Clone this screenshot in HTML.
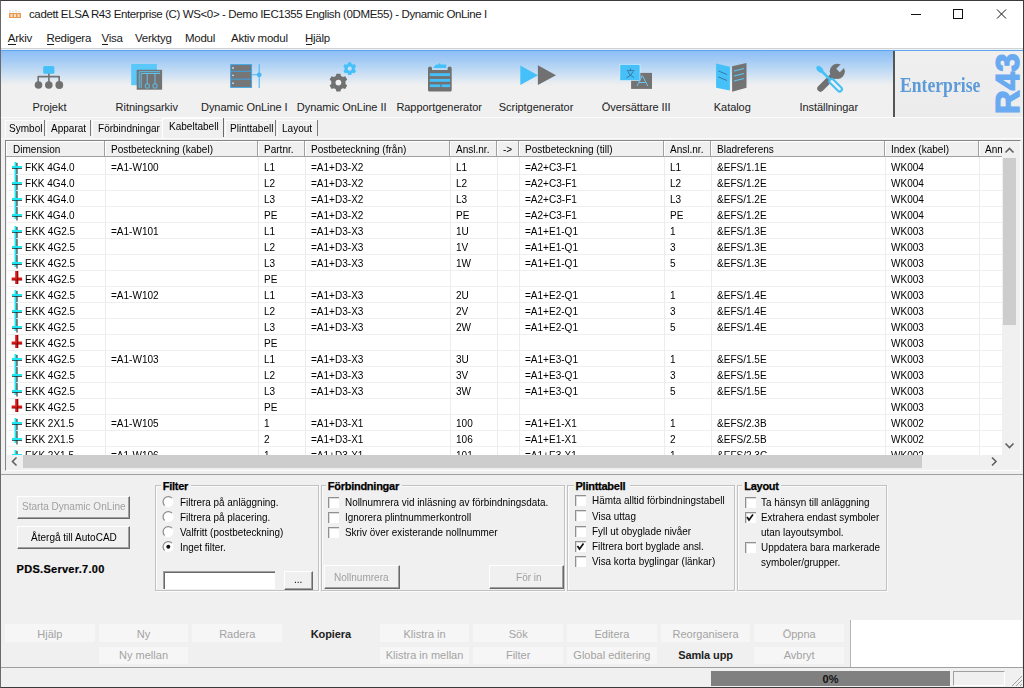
<!DOCTYPE html><html><head><meta charset="utf-8"><style>
html,body{margin:0;padding:0;width:1024px;height:688px;overflow:hidden;background:#f0f0f0;}
body{position:relative;font-family:"Liberation Sans",sans-serif;}
.t{position:absolute;white-space:pre;line-height:1;}
.r{position:absolute;box-sizing:border-box;}
svg{position:absolute;overflow:visible;}
</style></head><body><div class="r" style="left:0px;top:0px;width:1024px;height:48px;background:#fff;"></div><div class="r" style="left:0px;top:48px;width:1024px;height:1px;background:#d2d2d2;"></div><div class="r" style="left:0px;top:49px;width:1024px;height:1px;background:#eaf3fc;"></div><svg style="left:0;top:0" width="30" height="30">
<rect x="9" y="13" width="12" height="5" fill="#e89a55"/>
<rect x="10.5" y="14" width="2" height="3" fill="#fbe0c0"/><rect x="14" y="14" width="2" height="3" fill="#fbe0c0"/><rect x="17.5" y="14" width="2" height="3" fill="#fbe0c0"/>
<path d="M10 12.5V10M13 12.5V11M16 12.5V10M19 12.5V11" stroke="#d0d0d0" stroke-width="1"/>
</svg><div class="t" style="left:29px;top:9.37px;font-size:11.5px;letter-spacing:-0.38px;color:#1a1a1a;font-weight:400;font-family:'Liberation Sans',sans-serif;">cadett ELSA R43 Enterprise (C) WS&lt;0&gt; - Demo IEC1355 English (0DME55) - Dynamic OnLine I</div><svg style="left:0;top:0" width="1024" height="30">
<path d="M911 14.5H921" stroke="#111" stroke-width="1"/>
<rect x="953.5" y="9.5" width="9" height="9" fill="none" stroke="#111" stroke-width="1"/>
<path d="M997 9.5L1006 18.5M1006 9.5L997 18.5" stroke="#111" stroke-width="1"/>
</svg><div class="t" style="left:7.8px;top:33.07px;font-size:11.5px;letter-spacing:-0.25px;color:#1a1a1a;font-weight:400;font-family:'Liberation Sans',sans-serif;">Arkiv</div><div class="t" style="left:46.4px;top:33.07px;font-size:11.5px;letter-spacing:-0.25px;color:#1a1a1a;font-weight:400;font-family:'Liberation Sans',sans-serif;">Redigera</div><div class="t" style="left:101.5px;top:33.07px;font-size:11.5px;letter-spacing:-0.25px;color:#1a1a1a;font-weight:400;font-family:'Liberation Sans',sans-serif;">Visa</div><div class="t" style="left:135px;top:33.07px;font-size:11.5px;letter-spacing:-0.25px;color:#1a1a1a;font-weight:400;font-family:'Liberation Sans',sans-serif;">Verktyg</div><div class="t" style="left:185px;top:33.07px;font-size:11.5px;letter-spacing:-0.25px;color:#1a1a1a;font-weight:400;font-family:'Liberation Sans',sans-serif;">Modul</div><div class="t" style="left:231px;top:33.07px;font-size:11.5px;letter-spacing:-0.25px;color:#1a1a1a;font-weight:400;font-family:'Liberation Sans',sans-serif;">Aktiv modul</div><div class="t" style="left:305px;top:33.07px;font-size:11.5px;letter-spacing:-0.25px;color:#1a1a1a;font-weight:400;font-family:'Liberation Sans',sans-serif;">Hjälp</div><div class="r" style="left:8px;top:44px;width:8px;height:1px;background:#1a1a1a;"></div><div class="r" style="left:46.5px;top:44px;width:7px;height:1px;background:#1a1a1a;"></div><div class="r" style="left:102px;top:44px;width:6px;height:1px;background:#1a1a1a;"></div><div class="r" style="left:306px;top:44px;width:6px;height:1px;background:#1a1a1a;"></div><div class="r" style="left:0px;top:50px;width:1024px;height:1px;background:#5ea4f0;"></div><div class="r" style="left:0px;top:51px;width:1024px;height:66px;background:linear-gradient(#8cbff6 0px,#a3caf5 9px,#b9d7f4 17px,#d2e3f3 25px,#e7ecf1 31px,#f0f0f0 35px,#f0f0f0 66px);"></div><div class="r" style="left:0px;top:117px;width:1024px;height:1px;background:#fbfbfb;"></div><div class="r" style="left:893px;top:51px;width:1.5px;height:66px;background:#555;"></div><div class="r" style="left:894.5px;top:51px;width:128px;height:66px;background:linear-gradient(#efefef,#ececec);"></div><div class="t" style="left:900px;top:74.5px;font-family:'Liberation Serif',serif;font-weight:700;font-size:21px;color:#5c9ad8;transform:scaleX(0.84);transform-origin:0 0;">Enterprise</div><div class="t" style="left:991.3px;top:113.6px;font-family:'Liberation Sans',sans-serif;font-weight:700;font-size:33px;color:#6aaaf0;-webkit-text-stroke:1.3px #6aaaf0;transform:rotate(-90deg);transform-origin:0 0;line-height:1;">R43</div><div class="t" style="left:32.5px;top:101.99px;font-size:11px;letter-spacing:-0.05px;color:#222;font-weight:400;font-family:'Liberation Sans',sans-serif;">Projekt</div><div class="t" style="left:115.6px;top:101.99px;font-size:11px;letter-spacing:-0.05px;color:#222;font-weight:400;font-family:'Liberation Sans',sans-serif;">Ritningsarkiv</div><div class="t" style="left:201px;top:101.99px;font-size:11px;letter-spacing:-0.05px;color:#222;font-weight:400;font-family:'Liberation Sans',sans-serif;">Dynamic OnLine I</div><div class="t" style="left:296.8px;top:101.99px;font-size:11px;letter-spacing:-0.05px;color:#222;font-weight:400;font-family:'Liberation Sans',sans-serif;">Dynamic OnLine II</div><div class="t" style="left:396.4px;top:101.99px;font-size:11px;letter-spacing:-0.05px;color:#222;font-weight:400;font-family:'Liberation Sans',sans-serif;">Rapportgenerator</div><div class="t" style="left:498.8px;top:101.99px;font-size:11px;letter-spacing:-0.05px;color:#222;font-weight:400;font-family:'Liberation Sans',sans-serif;">Scriptgenerator</div><div class="t" style="left:601.7px;top:101.99px;font-size:11px;letter-spacing:-0.05px;color:#222;font-weight:400;font-family:'Liberation Sans',sans-serif;">Översättare III</div><div class="t" style="left:713.8px;top:101.99px;font-size:11px;letter-spacing:-0.05px;color:#222;font-weight:400;font-family:'Liberation Sans',sans-serif;">Katalog</div><div class="t" style="left:799.4px;top:101.99px;font-size:11px;letter-spacing:-0.05px;color:#222;font-weight:400;font-family:'Liberation Sans',sans-serif;">Inställningar</div><svg style="left:0;top:0" width="1024" height="117">
<!-- Projekt -->
<rect x="43.2" y="65.9" width="11.2" height="7.8" rx="1.5" fill="#45c0f8"/>
<path d="M48.9 73.5V77M38.2 76.6H59.2M38.2 76V82M48.9 76V82M59.2 76V82" stroke="#717171" stroke-width="1.6" fill="none"/>
<circle cx="38.5" cy="85" r="3.8" fill="#717171"/><circle cx="48.8" cy="85" r="3.8" fill="#717171"/><circle cx="59.3" cy="85" r="3.9" fill="#717171"/>
<!-- Ritningsarkiv -->
<rect x="131.2" y="64" width="25.7" height="21.2" fill="#5ac8fa"/>
<rect x="136.7" y="69.8" width="25.4" height="19.9" fill="#737373"/>
<path d="M139.2 88V71.7H160M141.2 88V73.5H160M147.2 73.5V84M155 73.5V84" stroke="#5ac8fa" stroke-width="0.9" fill="none"/>
<rect x="145.3" y="84" width="4" height="4" rx="1" stroke="#5ac8fa" stroke-width="0.9" fill="none"/>
<rect x="153" y="84" width="4" height="4" rx="1" stroke="#5ac8fa" stroke-width="0.9" fill="none"/>
<!-- Dynamic OnLine I -->
<rect x="230.6" y="64.6" width="21" height="22.8" fill="#767676" stroke="#3aa8ef" stroke-width="0.9"/>
<path d="M231 71.3H251.4M231 79.2H251.4" stroke="#3aa8ef" stroke-width="0.9"/>
<circle cx="233" cy="68" r="0.9" fill="#bfe6fb"/><circle cx="233" cy="75.3" r="0.9" fill="#bfe6fb"/><circle cx="233" cy="83.2" r="0.9" fill="#bfe6fb"/>
<path d="M252 74.8H259.2M259.2 64.3V88" stroke="#4bb6f5" stroke-width="1.1"/>
<circle cx="259.2" cy="74.8" r="2.4" fill="#4bb6f5"/>
<!-- Dynamic OnLine II -->
<g transform="translate(338.4 82.6)"><path id="gear" d="M-2 -8.8H2L2.6 -6.6L4.6 -5.6L6.8 -6.4L8.8 -3L7.1 -1.4V1.4L8.8 3L6.8 6.4L4.6 5.6L2.6 6.6L2 8.8H-2L-2.6 6.6L-4.6 5.6L-6.8 6.4L-8.8 3L-7.1 1.4V-1.4L-8.8 -3L-6.8 -6.4L-4.6 -5.6L-2.6 -6.6Z" fill="#717171"/><circle r="2.9" fill="#eef0f3"/></g>
<g transform="translate(349.7 68.7) scale(0.72)"><path d="M-2 -8.8H2L2.6 -6.6L4.6 -5.6L6.8 -6.4L8.8 -3L7.1 -1.4V1.4L8.8 3L6.8 6.4L4.6 5.6L2.6 6.6L2 8.8H-2L-2.6 6.6L-4.6 5.6L-6.8 6.4L-8.8 3L-7.1 1.4V-1.4L-8.8 -3L-6.8 -6.4L-4.6 -5.6L-2.6 -6.6Z" fill="#45c0f8"/><circle r="3" fill="#c2def8"/></g>
<!-- Rapportgenerator -->
<path d="M428 68.2Q428 66.4 430 66.4Q432 66.4 432 68.2V70H447.6V68.2Q447.6 66.4 449.7 66.4Q451.7 66.4 451.7 68.2V90Q451.7 91.5 450.2 91.5H429.5Q428 91.5 428 90Z" fill="#717171"/>
<path d="M433.1 68L436 64.5H438.5Q439.6 62.2 440.8 64.5H446.2V68Z" fill="#45c0f8"/>
<rect x="429.8" y="73.2" width="20.3" height="2.9" fill="#45c0f8"/>
<rect x="429.8" y="78.9" width="20.3" height="2.9" fill="#45c0f8"/>
<rect x="429.8" y="84.4" width="10.6" height="2.7" fill="#45c0f8"/><rect x="441.6" y="84.4" width="8.5" height="2.7" fill="#45c0f8"/>
<!-- Scriptgenerator -->
<path d="M520.3 65.6L538 75.3L520.3 85.1Z" fill="#45c0f8"/>
<path d="M537.9 65.2L556 75.2L537.9 85Z" fill="#717171"/>
<!-- Oversattare -->
<rect x="631.1" y="72.9" width="20.9" height="16" fill="#737373"/>
<rect x="619.9" y="64.3" width="20.1" height="16.2" fill="#45c0f8" stroke="#e4f1fb" stroke-width="0.6"/>
<path d="M630.5 68.5V70.3M626.8 70.6H634.4M628 71.5Q629.5 76 634 77.6M633 71.5Q631.5 76 626.5 77.8" stroke="#3d6f98" stroke-width="0.9" fill="none"/>
<path d="M637 86L642.3 75.5L647.8 86M639 82.5H645.7" stroke="#6bc6f5" stroke-width="1" fill="none"/>
<!-- Katalog -->
<path d="M716.1 63.5L729.9 66.8V90.6L716.1 87.8Z" fill="#45c0f8"/>
<path d="M718.5 71L727 74.5M718.5 77L727 80.5" stroke="#3c6d95" stroke-width="0.9"/>
<path d="M732.1 66.3L746.5 63V87.8L732.1 91.7Z" fill="#737373"/>
<path d="M734 71L744 68.5M734 76L744 73.5M734 81L744 78.5" stroke="#5ac8fa" stroke-width="1.2"/>
<!-- Installningar -->
<mask id="wm" maskUnits="userSpaceOnUse" x="800" y="50" width="60" height="50"><rect x="800" y="50" width="60" height="50" fill="#fff"/><path d="M838 70.5L847 61.5" stroke="#000" stroke-width="5" stroke-linecap="butt"/></mask>
<g mask="url(#wm)"><path d="M820.5 88.5L835 74" stroke="#717171" stroke-width="6.5" stroke-linecap="round"/><circle cx="837.3" cy="71.3" r="7.6" fill="#717171"/></g>
<path d="M819.5 69L829.2 78.7" stroke="#45c0f8" stroke-width="2.6" stroke-linecap="round"/><ellipse cx="819.8" cy="69.3" rx="4" ry="2.6" transform="rotate(45 819.8 69.3)" fill="#45c0f8"/>
<path d="M831.8 81.3L839.6 89.1" stroke="#45c0f8" stroke-width="6.8" stroke-linecap="round"/>
<path d="M831.8 81.3L839.6 89.1" stroke="#eef0f2" stroke-width="2.6" stroke-linecap="round"/>
</svg><div class="r" style="left:5px;top:120px;width:40px;height:17px;background:#f0f0f0;border-top:1px solid #fdfdfd;border-left:1px solid #fdfdfd;"></div><div class="r" style="left:44px;top:120px;width:1px;height:16px;background:#7a7a7a;"></div><div class="t" style="left:8.6px;top:123.21px;font-size:11.8px;letter-spacing:0px;color:#000;font-weight:400;font-family:'Liberation Sans',sans-serif;transform:scaleX(0.85);transform-origin:0 0;">Symbol</div><div class="r" style="left:46px;top:120px;width:45px;height:17px;background:#f0f0f0;border-top:1px solid #fdfdfd;border-left:1px solid #fdfdfd;"></div><div class="r" style="left:90px;top:120px;width:1px;height:16px;background:#7a7a7a;"></div><div class="t" style="left:51.25px;top:123.21px;font-size:11.8px;letter-spacing:0px;color:#000;font-weight:400;font-family:'Liberation Sans',sans-serif;transform:scaleX(0.85);transform-origin:0 0;">Apparat</div><div class="r" style="left:92px;top:120px;width:70px;height:17px;background:#f0f0f0;border-top:1px solid #fdfdfd;border-left:1px solid #fdfdfd;"></div><div class="t" style="left:97.7px;top:123.21px;font-size:11.8px;letter-spacing:0px;color:#000;font-weight:400;font-family:'Liberation Sans',sans-serif;transform:scaleX(0.85);transform-origin:0 0;">Förbindningar</div><div class="r" style="left:224.5px;top:120px;width:51.5px;height:17px;background:#f0f0f0;border-top:1px solid #fdfdfd;border-left:1px solid #fdfdfd;"></div><div class="r" style="left:275px;top:120px;width:1px;height:16px;background:#7a7a7a;"></div><div class="t" style="left:229.7px;top:123.21px;font-size:11.8px;letter-spacing:0px;color:#000;font-weight:400;font-family:'Liberation Sans',sans-serif;transform:scaleX(0.85);transform-origin:0 0;">Plinttabell</div><div class="r" style="left:277px;top:120px;width:40.5px;height:17px;background:#f0f0f0;border-top:1px solid #fdfdfd;border-left:1px solid #fdfdfd;"></div><div class="r" style="left:316.5px;top:120px;width:1px;height:16px;background:#7a7a7a;"></div><div class="t" style="left:282.4px;top:123.21px;font-size:11.8px;letter-spacing:0px;color:#000;font-weight:400;font-family:'Liberation Sans',sans-serif;transform:scaleX(0.85);transform-origin:0 0;">Layout</div><div class="r" style="left:161.5px;top:118px;width:62.5px;height:20px;background:#f0f0f0;border-top:1px solid #fff;border-left:1px solid #fff;"></div><div class="r" style="left:223px;top:118px;width:1px;height:19px;background:#6a6a6a;"></div><div class="t" style="left:168.75px;top:121.01px;font-size:11.8px;letter-spacing:0px;color:#000;font-weight:400;font-family:'Liberation Sans',sans-serif;transform:scaleX(0.85);transform-origin:0 0;">Kabeltabell</div><div class="r" style="left:0px;top:138px;width:1024px;height:1px;background:#fafafa;"></div><div class="r" style="left:5px;top:140px;width:1016px;height:331px;background:#f0f0f0;border-top:1px solid #858585;border-left:1px solid #858585;border-right:1px solid #fdfdfd;border-bottom:1px solid #fdfdfd;"></div><div class="r" style="left:7px;top:157px;width:995px;height:298px;background:#fff;"></div><div class="r" style="left:6px;top:141px;width:996px;height:16px;background:#f0f0f0;"></div><div class="r" style="left:6px;top:141px;width:996px;height:1px;background:#fff;"></div><div class="r" style="left:6px;top:141px;width:1px;height:16px;background:#fff;"></div><div class="r" style="left:6px;top:156px;width:996px;height:1px;background:#a0a0a0;"></div><div class="r" style="left:104px;top:141px;width:1px;height:15px;background:#a0a0a0;"></div><div class="r" style="left:105px;top:142px;width:1px;height:14px;background:#fff;"></div><div class="r" style="left:257px;top:141px;width:1px;height:15px;background:#a0a0a0;"></div><div class="r" style="left:258px;top:142px;width:1px;height:14px;background:#fff;"></div><div class="r" style="left:304px;top:141px;width:1px;height:15px;background:#a0a0a0;"></div><div class="r" style="left:305px;top:142px;width:1px;height:14px;background:#fff;"></div><div class="r" style="left:449px;top:141px;width:1px;height:15px;background:#a0a0a0;"></div><div class="r" style="left:450px;top:142px;width:1px;height:14px;background:#fff;"></div><div class="r" style="left:496px;top:141px;width:1px;height:15px;background:#a0a0a0;"></div><div class="r" style="left:497px;top:142px;width:1px;height:14px;background:#fff;"></div><div class="r" style="left:518px;top:141px;width:1px;height:15px;background:#a0a0a0;"></div><div class="r" style="left:519px;top:142px;width:1px;height:14px;background:#fff;"></div><div class="r" style="left:663px;top:141px;width:1px;height:15px;background:#a0a0a0;"></div><div class="r" style="left:664px;top:142px;width:1px;height:14px;background:#fff;"></div><div class="r" style="left:710px;top:141px;width:1px;height:15px;background:#a0a0a0;"></div><div class="r" style="left:711px;top:142px;width:1px;height:14px;background:#fff;"></div><div class="r" style="left:884px;top:141px;width:1px;height:15px;background:#a0a0a0;"></div><div class="r" style="left:885px;top:142px;width:1px;height:14px;background:#fff;"></div><div class="r" style="left:978px;top:141px;width:1px;height:15px;background:#a0a0a0;"></div><div class="r" style="left:979px;top:142px;width:1px;height:14px;background:#fff;"></div><div style="position:absolute;left:0;top:0;width:1002px;height:470px;overflow:hidden;"><div class="t" style="left:13px;top:144.41px;font-size:11.8px;letter-spacing:0px;color:#000;font-weight:400;font-family:'Liberation Sans',sans-serif;transform:scaleX(0.85);transform-origin:0 0;">Dimension</div><div class="t" style="left:111px;top:144.41px;font-size:11.8px;letter-spacing:0px;color:#000;font-weight:400;font-family:'Liberation Sans',sans-serif;transform:scaleX(0.85);transform-origin:0 0;">Postbeteckning (kabel)</div><div class="t" style="left:264px;top:144.41px;font-size:11.8px;letter-spacing:0px;color:#000;font-weight:400;font-family:'Liberation Sans',sans-serif;transform:scaleX(0.85);transform-origin:0 0;">Partnr.</div><div class="t" style="left:311px;top:144.41px;font-size:11.8px;letter-spacing:0px;color:#000;font-weight:400;font-family:'Liberation Sans',sans-serif;transform:scaleX(0.85);transform-origin:0 0;">Postbeteckning (från)</div><div class="t" style="left:456px;top:144.41px;font-size:11.8px;letter-spacing:0px;color:#000;font-weight:400;font-family:'Liberation Sans',sans-serif;transform:scaleX(0.85);transform-origin:0 0;">Ansl.nr.</div><div class="t" style="left:503px;top:144.41px;font-size:11.8px;letter-spacing:0px;color:#000;font-weight:400;font-family:'Liberation Sans',sans-serif;transform:scaleX(0.85);transform-origin:0 0;">-&gt;</div><div class="t" style="left:525px;top:144.41px;font-size:11.8px;letter-spacing:0px;color:#000;font-weight:400;font-family:'Liberation Sans',sans-serif;transform:scaleX(0.85);transform-origin:0 0;">Postbeteckning (till)</div><div class="t" style="left:670px;top:144.41px;font-size:11.8px;letter-spacing:0px;color:#000;font-weight:400;font-family:'Liberation Sans',sans-serif;transform:scaleX(0.85);transform-origin:0 0;">Ansl.nr.</div><div class="t" style="left:717px;top:144.41px;font-size:11.8px;letter-spacing:0px;color:#000;font-weight:400;font-family:'Liberation Sans',sans-serif;transform:scaleX(0.85);transform-origin:0 0;">Bladreferens</div><div class="t" style="left:891px;top:144.41px;font-size:11.8px;letter-spacing:0px;color:#000;font-weight:400;font-family:'Liberation Sans',sans-serif;transform:scaleX(0.85);transform-origin:0 0;">Index (kabel)</div><div class="t" style="left:985px;top:144.41px;font-size:11.8px;letter-spacing:0px;color:#000;font-weight:400;font-family:'Liberation Sans',sans-serif;transform:scaleX(0.85);transform-origin:0 0;">Anm</div></div><div style="position:absolute;left:7px;top:157px;width:995px;height:297.5px;overflow:hidden;"><div class="r" style="left:0px;top:17px;width:995px;height:1px;background:#efefef;"></div><div class="r" style="left:0px;top:33px;width:995px;height:1px;background:#efefef;"></div><div class="r" style="left:0px;top:49px;width:995px;height:1px;background:#efefef;"></div><div class="r" style="left:0px;top:65px;width:995px;height:1px;background:#efefef;"></div><div class="r" style="left:0px;top:81px;width:995px;height:1px;background:#efefef;"></div><div class="r" style="left:0px;top:97px;width:995px;height:1px;background:#efefef;"></div><div class="r" style="left:0px;top:113px;width:995px;height:1px;background:#efefef;"></div><div class="r" style="left:0px;top:129px;width:995px;height:1px;background:#efefef;"></div><div class="r" style="left:0px;top:145px;width:995px;height:1px;background:#efefef;"></div><div class="r" style="left:0px;top:161px;width:995px;height:1px;background:#efefef;"></div><div class="r" style="left:0px;top:177px;width:995px;height:1px;background:#efefef;"></div><div class="r" style="left:0px;top:193px;width:995px;height:1px;background:#efefef;"></div><div class="r" style="left:0px;top:209px;width:995px;height:1px;background:#efefef;"></div><div class="r" style="left:0px;top:225px;width:995px;height:1px;background:#efefef;"></div><div class="r" style="left:0px;top:241px;width:995px;height:1px;background:#efefef;"></div><div class="r" style="left:0px;top:257px;width:995px;height:1px;background:#efefef;"></div><div class="r" style="left:0px;top:273px;width:995px;height:1px;background:#efefef;"></div><div class="r" style="left:0px;top:289px;width:995px;height:1px;background:#efefef;"></div><div class="r" style="left:0px;top:305px;width:995px;height:1px;background:#efefef;"></div><div class="r" style="left:98px;top:0px;width:1px;height:300px;background:#ececec;"></div><div class="r" style="left:251px;top:0px;width:1px;height:300px;background:#ececec;"></div><div class="r" style="left:298px;top:0px;width:1px;height:300px;background:#ececec;"></div><div class="r" style="left:443px;top:0px;width:1px;height:300px;background:#ececec;"></div><div class="r" style="left:490px;top:0px;width:1px;height:300px;background:#ececec;"></div><div class="r" style="left:512px;top:0px;width:1px;height:300px;background:#ececec;"></div><div class="r" style="left:657px;top:0px;width:1px;height:300px;background:#ececec;"></div><div class="r" style="left:704px;top:0px;width:1px;height:300px;background:#ececec;"></div><div class="r" style="left:878px;top:0px;width:1px;height:300px;background:#ececec;"></div><div class="r" style="left:972px;top:0px;width:1px;height:300px;background:#ececec;"></div><div class="t" style="left:17.8px;top:5.11px;font-size:11.8px;letter-spacing:0px;color:#000;font-weight:400;font-family:'Liberation Sans',sans-serif;transform:scaleX(0.85);transform-origin:0 0;">FKK 4G4.0</div><div class="t" style="left:104px;top:5.11px;font-size:11.8px;letter-spacing:0px;color:#000;font-weight:400;font-family:'Liberation Sans',sans-serif;transform:scaleX(0.85);transform-origin:0 0;">=A1-W100</div><div class="t" style="left:257px;top:5.11px;font-size:11.8px;letter-spacing:0px;color:#000;font-weight:400;font-family:'Liberation Sans',sans-serif;transform:scaleX(0.85);transform-origin:0 0;">L1</div><div class="t" style="left:304px;top:5.11px;font-size:11.8px;letter-spacing:0px;color:#000;font-weight:400;font-family:'Liberation Sans',sans-serif;transform:scaleX(0.85);transform-origin:0 0;">=A1+D3-X2</div><div class="t" style="left:449px;top:5.11px;font-size:11.8px;letter-spacing:0px;color:#000;font-weight:400;font-family:'Liberation Sans',sans-serif;transform:scaleX(0.85);transform-origin:0 0;">L1</div><div class="t" style="left:518px;top:5.11px;font-size:11.8px;letter-spacing:0px;color:#000;font-weight:400;font-family:'Liberation Sans',sans-serif;transform:scaleX(0.85);transform-origin:0 0;">=A2+C3-F1</div><div class="t" style="left:663px;top:5.11px;font-size:11.8px;letter-spacing:0px;color:#000;font-weight:400;font-family:'Liberation Sans',sans-serif;transform:scaleX(0.85);transform-origin:0 0;">L1</div><div class="t" style="left:710px;top:5.11px;font-size:11.8px;letter-spacing:0px;color:#000;font-weight:400;font-family:'Liberation Sans',sans-serif;transform:scaleX(0.85);transform-origin:0 0;">&amp;EFS/1.1E</div><div class="t" style="left:884px;top:5.11px;font-size:11.8px;letter-spacing:0px;color:#000;font-weight:400;font-family:'Liberation Sans',sans-serif;transform:scaleX(0.85);transform-origin:0 0;">WK004</div><div class="t" style="left:17.8px;top:21.11px;font-size:11.8px;letter-spacing:0px;color:#000;font-weight:400;font-family:'Liberation Sans',sans-serif;transform:scaleX(0.85);transform-origin:0 0;">FKK 4G4.0</div><div class="t" style="left:257px;top:21.11px;font-size:11.8px;letter-spacing:0px;color:#000;font-weight:400;font-family:'Liberation Sans',sans-serif;transform:scaleX(0.85);transform-origin:0 0;">L2</div><div class="t" style="left:304px;top:21.11px;font-size:11.8px;letter-spacing:0px;color:#000;font-weight:400;font-family:'Liberation Sans',sans-serif;transform:scaleX(0.85);transform-origin:0 0;">=A1+D3-X2</div><div class="t" style="left:449px;top:21.11px;font-size:11.8px;letter-spacing:0px;color:#000;font-weight:400;font-family:'Liberation Sans',sans-serif;transform:scaleX(0.85);transform-origin:0 0;">L2</div><div class="t" style="left:518px;top:21.11px;font-size:11.8px;letter-spacing:0px;color:#000;font-weight:400;font-family:'Liberation Sans',sans-serif;transform:scaleX(0.85);transform-origin:0 0;">=A2+C3-F1</div><div class="t" style="left:663px;top:21.11px;font-size:11.8px;letter-spacing:0px;color:#000;font-weight:400;font-family:'Liberation Sans',sans-serif;transform:scaleX(0.85);transform-origin:0 0;">L2</div><div class="t" style="left:710px;top:21.11px;font-size:11.8px;letter-spacing:0px;color:#000;font-weight:400;font-family:'Liberation Sans',sans-serif;transform:scaleX(0.85);transform-origin:0 0;">&amp;EFS/1.2E</div><div class="t" style="left:884px;top:21.11px;font-size:11.8px;letter-spacing:0px;color:#000;font-weight:400;font-family:'Liberation Sans',sans-serif;transform:scaleX(0.85);transform-origin:0 0;">WK004</div><div class="t" style="left:17.8px;top:37.11px;font-size:11.8px;letter-spacing:0px;color:#000;font-weight:400;font-family:'Liberation Sans',sans-serif;transform:scaleX(0.85);transform-origin:0 0;">FKK 4G4.0</div><div class="t" style="left:257px;top:37.11px;font-size:11.8px;letter-spacing:0px;color:#000;font-weight:400;font-family:'Liberation Sans',sans-serif;transform:scaleX(0.85);transform-origin:0 0;">L3</div><div class="t" style="left:304px;top:37.11px;font-size:11.8px;letter-spacing:0px;color:#000;font-weight:400;font-family:'Liberation Sans',sans-serif;transform:scaleX(0.85);transform-origin:0 0;">=A1+D3-X2</div><div class="t" style="left:449px;top:37.11px;font-size:11.8px;letter-spacing:0px;color:#000;font-weight:400;font-family:'Liberation Sans',sans-serif;transform:scaleX(0.85);transform-origin:0 0;">L3</div><div class="t" style="left:518px;top:37.11px;font-size:11.8px;letter-spacing:0px;color:#000;font-weight:400;font-family:'Liberation Sans',sans-serif;transform:scaleX(0.85);transform-origin:0 0;">=A2+C3-F1</div><div class="t" style="left:663px;top:37.11px;font-size:11.8px;letter-spacing:0px;color:#000;font-weight:400;font-family:'Liberation Sans',sans-serif;transform:scaleX(0.85);transform-origin:0 0;">L3</div><div class="t" style="left:710px;top:37.11px;font-size:11.8px;letter-spacing:0px;color:#000;font-weight:400;font-family:'Liberation Sans',sans-serif;transform:scaleX(0.85);transform-origin:0 0;">&amp;EFS/1.2E</div><div class="t" style="left:884px;top:37.11px;font-size:11.8px;letter-spacing:0px;color:#000;font-weight:400;font-family:'Liberation Sans',sans-serif;transform:scaleX(0.85);transform-origin:0 0;">WK004</div><div class="t" style="left:17.8px;top:53.11px;font-size:11.8px;letter-spacing:0px;color:#000;font-weight:400;font-family:'Liberation Sans',sans-serif;transform:scaleX(0.85);transform-origin:0 0;">FKK 4G4.0</div><div class="t" style="left:257px;top:53.11px;font-size:11.8px;letter-spacing:0px;color:#000;font-weight:400;font-family:'Liberation Sans',sans-serif;transform:scaleX(0.85);transform-origin:0 0;">PE</div><div class="t" style="left:304px;top:53.11px;font-size:11.8px;letter-spacing:0px;color:#000;font-weight:400;font-family:'Liberation Sans',sans-serif;transform:scaleX(0.85);transform-origin:0 0;">=A1+D3-X2</div><div class="t" style="left:449px;top:53.11px;font-size:11.8px;letter-spacing:0px;color:#000;font-weight:400;font-family:'Liberation Sans',sans-serif;transform:scaleX(0.85);transform-origin:0 0;">PE</div><div class="t" style="left:518px;top:53.11px;font-size:11.8px;letter-spacing:0px;color:#000;font-weight:400;font-family:'Liberation Sans',sans-serif;transform:scaleX(0.85);transform-origin:0 0;">=A2+C3-F1</div><div class="t" style="left:663px;top:53.11px;font-size:11.8px;letter-spacing:0px;color:#000;font-weight:400;font-family:'Liberation Sans',sans-serif;transform:scaleX(0.85);transform-origin:0 0;">PE</div><div class="t" style="left:710px;top:53.11px;font-size:11.8px;letter-spacing:0px;color:#000;font-weight:400;font-family:'Liberation Sans',sans-serif;transform:scaleX(0.85);transform-origin:0 0;">&amp;EFS/1.2E</div><div class="t" style="left:884px;top:53.11px;font-size:11.8px;letter-spacing:0px;color:#000;font-weight:400;font-family:'Liberation Sans',sans-serif;transform:scaleX(0.85);transform-origin:0 0;">WK004</div><div class="t" style="left:17.8px;top:69.11px;font-size:11.8px;letter-spacing:0px;color:#000;font-weight:400;font-family:'Liberation Sans',sans-serif;transform:scaleX(0.85);transform-origin:0 0;">EKK 4G2.5</div><div class="t" style="left:104px;top:69.11px;font-size:11.8px;letter-spacing:0px;color:#000;font-weight:400;font-family:'Liberation Sans',sans-serif;transform:scaleX(0.85);transform-origin:0 0;">=A1-W101</div><div class="t" style="left:257px;top:69.11px;font-size:11.8px;letter-spacing:0px;color:#000;font-weight:400;font-family:'Liberation Sans',sans-serif;transform:scaleX(0.85);transform-origin:0 0;">L1</div><div class="t" style="left:304px;top:69.11px;font-size:11.8px;letter-spacing:0px;color:#000;font-weight:400;font-family:'Liberation Sans',sans-serif;transform:scaleX(0.85);transform-origin:0 0;">=A1+D3-X3</div><div class="t" style="left:449px;top:69.11px;font-size:11.8px;letter-spacing:0px;color:#000;font-weight:400;font-family:'Liberation Sans',sans-serif;transform:scaleX(0.85);transform-origin:0 0;">1U</div><div class="t" style="left:518px;top:69.11px;font-size:11.8px;letter-spacing:0px;color:#000;font-weight:400;font-family:'Liberation Sans',sans-serif;transform:scaleX(0.85);transform-origin:0 0;">=A1+E1-Q1</div><div class="t" style="left:663px;top:69.11px;font-size:11.8px;letter-spacing:0px;color:#000;font-weight:400;font-family:'Liberation Sans',sans-serif;transform:scaleX(0.85);transform-origin:0 0;">1</div><div class="t" style="left:710px;top:69.11px;font-size:11.8px;letter-spacing:0px;color:#000;font-weight:400;font-family:'Liberation Sans',sans-serif;transform:scaleX(0.85);transform-origin:0 0;">&amp;EFS/1.3E</div><div class="t" style="left:884px;top:69.11px;font-size:11.8px;letter-spacing:0px;color:#000;font-weight:400;font-family:'Liberation Sans',sans-serif;transform:scaleX(0.85);transform-origin:0 0;">WK003</div><div class="t" style="left:17.8px;top:85.11px;font-size:11.8px;letter-spacing:0px;color:#000;font-weight:400;font-family:'Liberation Sans',sans-serif;transform:scaleX(0.85);transform-origin:0 0;">EKK 4G2.5</div><div class="t" style="left:257px;top:85.11px;font-size:11.8px;letter-spacing:0px;color:#000;font-weight:400;font-family:'Liberation Sans',sans-serif;transform:scaleX(0.85);transform-origin:0 0;">L2</div><div class="t" style="left:304px;top:85.11px;font-size:11.8px;letter-spacing:0px;color:#000;font-weight:400;font-family:'Liberation Sans',sans-serif;transform:scaleX(0.85);transform-origin:0 0;">=A1+D3-X3</div><div class="t" style="left:449px;top:85.11px;font-size:11.8px;letter-spacing:0px;color:#000;font-weight:400;font-family:'Liberation Sans',sans-serif;transform:scaleX(0.85);transform-origin:0 0;">1V</div><div class="t" style="left:518px;top:85.11px;font-size:11.8px;letter-spacing:0px;color:#000;font-weight:400;font-family:'Liberation Sans',sans-serif;transform:scaleX(0.85);transform-origin:0 0;">=A1+E1-Q1</div><div class="t" style="left:663px;top:85.11px;font-size:11.8px;letter-spacing:0px;color:#000;font-weight:400;font-family:'Liberation Sans',sans-serif;transform:scaleX(0.85);transform-origin:0 0;">3</div><div class="t" style="left:710px;top:85.11px;font-size:11.8px;letter-spacing:0px;color:#000;font-weight:400;font-family:'Liberation Sans',sans-serif;transform:scaleX(0.85);transform-origin:0 0;">&amp;EFS/1.3E</div><div class="t" style="left:884px;top:85.11px;font-size:11.8px;letter-spacing:0px;color:#000;font-weight:400;font-family:'Liberation Sans',sans-serif;transform:scaleX(0.85);transform-origin:0 0;">WK003</div><div class="t" style="left:17.8px;top:101.11px;font-size:11.8px;letter-spacing:0px;color:#000;font-weight:400;font-family:'Liberation Sans',sans-serif;transform:scaleX(0.85);transform-origin:0 0;">EKK 4G2.5</div><div class="t" style="left:257px;top:101.11px;font-size:11.8px;letter-spacing:0px;color:#000;font-weight:400;font-family:'Liberation Sans',sans-serif;transform:scaleX(0.85);transform-origin:0 0;">L3</div><div class="t" style="left:304px;top:101.11px;font-size:11.8px;letter-spacing:0px;color:#000;font-weight:400;font-family:'Liberation Sans',sans-serif;transform:scaleX(0.85);transform-origin:0 0;">=A1+D3-X3</div><div class="t" style="left:449px;top:101.11px;font-size:11.8px;letter-spacing:0px;color:#000;font-weight:400;font-family:'Liberation Sans',sans-serif;transform:scaleX(0.85);transform-origin:0 0;">1W</div><div class="t" style="left:518px;top:101.11px;font-size:11.8px;letter-spacing:0px;color:#000;font-weight:400;font-family:'Liberation Sans',sans-serif;transform:scaleX(0.85);transform-origin:0 0;">=A1+E1-Q1</div><div class="t" style="left:663px;top:101.11px;font-size:11.8px;letter-spacing:0px;color:#000;font-weight:400;font-family:'Liberation Sans',sans-serif;transform:scaleX(0.85);transform-origin:0 0;">5</div><div class="t" style="left:710px;top:101.11px;font-size:11.8px;letter-spacing:0px;color:#000;font-weight:400;font-family:'Liberation Sans',sans-serif;transform:scaleX(0.85);transform-origin:0 0;">&amp;EFS/1.3E</div><div class="t" style="left:884px;top:101.11px;font-size:11.8px;letter-spacing:0px;color:#000;font-weight:400;font-family:'Liberation Sans',sans-serif;transform:scaleX(0.85);transform-origin:0 0;">WK003</div><div class="t" style="left:17.8px;top:117.11px;font-size:11.8px;letter-spacing:0px;color:#000;font-weight:400;font-family:'Liberation Sans',sans-serif;transform:scaleX(0.85);transform-origin:0 0;">EKK 4G2.5</div><div class="t" style="left:257px;top:117.11px;font-size:11.8px;letter-spacing:0px;color:#000;font-weight:400;font-family:'Liberation Sans',sans-serif;transform:scaleX(0.85);transform-origin:0 0;">PE</div><div class="t" style="left:884px;top:117.11px;font-size:11.8px;letter-spacing:0px;color:#000;font-weight:400;font-family:'Liberation Sans',sans-serif;transform:scaleX(0.85);transform-origin:0 0;">WK003</div><div class="t" style="left:17.8px;top:133.11px;font-size:11.8px;letter-spacing:0px;color:#000;font-weight:400;font-family:'Liberation Sans',sans-serif;transform:scaleX(0.85);transform-origin:0 0;">EKK 4G2.5</div><div class="t" style="left:104px;top:133.11px;font-size:11.8px;letter-spacing:0px;color:#000;font-weight:400;font-family:'Liberation Sans',sans-serif;transform:scaleX(0.85);transform-origin:0 0;">=A1-W102</div><div class="t" style="left:257px;top:133.11px;font-size:11.8px;letter-spacing:0px;color:#000;font-weight:400;font-family:'Liberation Sans',sans-serif;transform:scaleX(0.85);transform-origin:0 0;">L1</div><div class="t" style="left:304px;top:133.11px;font-size:11.8px;letter-spacing:0px;color:#000;font-weight:400;font-family:'Liberation Sans',sans-serif;transform:scaleX(0.85);transform-origin:0 0;">=A1+D3-X3</div><div class="t" style="left:449px;top:133.11px;font-size:11.8px;letter-spacing:0px;color:#000;font-weight:400;font-family:'Liberation Sans',sans-serif;transform:scaleX(0.85);transform-origin:0 0;">2U</div><div class="t" style="left:518px;top:133.11px;font-size:11.8px;letter-spacing:0px;color:#000;font-weight:400;font-family:'Liberation Sans',sans-serif;transform:scaleX(0.85);transform-origin:0 0;">=A1+E2-Q1</div><div class="t" style="left:663px;top:133.11px;font-size:11.8px;letter-spacing:0px;color:#000;font-weight:400;font-family:'Liberation Sans',sans-serif;transform:scaleX(0.85);transform-origin:0 0;">1</div><div class="t" style="left:710px;top:133.11px;font-size:11.8px;letter-spacing:0px;color:#000;font-weight:400;font-family:'Liberation Sans',sans-serif;transform:scaleX(0.85);transform-origin:0 0;">&amp;EFS/1.4E</div><div class="t" style="left:884px;top:133.11px;font-size:11.8px;letter-spacing:0px;color:#000;font-weight:400;font-family:'Liberation Sans',sans-serif;transform:scaleX(0.85);transform-origin:0 0;">WK003</div><div class="t" style="left:17.8px;top:149.11px;font-size:11.8px;letter-spacing:0px;color:#000;font-weight:400;font-family:'Liberation Sans',sans-serif;transform:scaleX(0.85);transform-origin:0 0;">EKK 4G2.5</div><div class="t" style="left:257px;top:149.11px;font-size:11.8px;letter-spacing:0px;color:#000;font-weight:400;font-family:'Liberation Sans',sans-serif;transform:scaleX(0.85);transform-origin:0 0;">L2</div><div class="t" style="left:304px;top:149.11px;font-size:11.8px;letter-spacing:0px;color:#000;font-weight:400;font-family:'Liberation Sans',sans-serif;transform:scaleX(0.85);transform-origin:0 0;">=A1+D3-X3</div><div class="t" style="left:449px;top:149.11px;font-size:11.8px;letter-spacing:0px;color:#000;font-weight:400;font-family:'Liberation Sans',sans-serif;transform:scaleX(0.85);transform-origin:0 0;">2V</div><div class="t" style="left:518px;top:149.11px;font-size:11.8px;letter-spacing:0px;color:#000;font-weight:400;font-family:'Liberation Sans',sans-serif;transform:scaleX(0.85);transform-origin:0 0;">=A1+E2-Q1</div><div class="t" style="left:663px;top:149.11px;font-size:11.8px;letter-spacing:0px;color:#000;font-weight:400;font-family:'Liberation Sans',sans-serif;transform:scaleX(0.85);transform-origin:0 0;">3</div><div class="t" style="left:710px;top:149.11px;font-size:11.8px;letter-spacing:0px;color:#000;font-weight:400;font-family:'Liberation Sans',sans-serif;transform:scaleX(0.85);transform-origin:0 0;">&amp;EFS/1.4E</div><div class="t" style="left:884px;top:149.11px;font-size:11.8px;letter-spacing:0px;color:#000;font-weight:400;font-family:'Liberation Sans',sans-serif;transform:scaleX(0.85);transform-origin:0 0;">WK003</div><div class="t" style="left:17.8px;top:165.11px;font-size:11.8px;letter-spacing:0px;color:#000;font-weight:400;font-family:'Liberation Sans',sans-serif;transform:scaleX(0.85);transform-origin:0 0;">EKK 4G2.5</div><div class="t" style="left:257px;top:165.11px;font-size:11.8px;letter-spacing:0px;color:#000;font-weight:400;font-family:'Liberation Sans',sans-serif;transform:scaleX(0.85);transform-origin:0 0;">L3</div><div class="t" style="left:304px;top:165.11px;font-size:11.8px;letter-spacing:0px;color:#000;font-weight:400;font-family:'Liberation Sans',sans-serif;transform:scaleX(0.85);transform-origin:0 0;">=A1+D3-X3</div><div class="t" style="left:449px;top:165.11px;font-size:11.8px;letter-spacing:0px;color:#000;font-weight:400;font-family:'Liberation Sans',sans-serif;transform:scaleX(0.85);transform-origin:0 0;">2W</div><div class="t" style="left:518px;top:165.11px;font-size:11.8px;letter-spacing:0px;color:#000;font-weight:400;font-family:'Liberation Sans',sans-serif;transform:scaleX(0.85);transform-origin:0 0;">=A1+E2-Q1</div><div class="t" style="left:663px;top:165.11px;font-size:11.8px;letter-spacing:0px;color:#000;font-weight:400;font-family:'Liberation Sans',sans-serif;transform:scaleX(0.85);transform-origin:0 0;">5</div><div class="t" style="left:710px;top:165.11px;font-size:11.8px;letter-spacing:0px;color:#000;font-weight:400;font-family:'Liberation Sans',sans-serif;transform:scaleX(0.85);transform-origin:0 0;">&amp;EFS/1.4E</div><div class="t" style="left:884px;top:165.11px;font-size:11.8px;letter-spacing:0px;color:#000;font-weight:400;font-family:'Liberation Sans',sans-serif;transform:scaleX(0.85);transform-origin:0 0;">WK003</div><div class="t" style="left:17.8px;top:181.11px;font-size:11.8px;letter-spacing:0px;color:#000;font-weight:400;font-family:'Liberation Sans',sans-serif;transform:scaleX(0.85);transform-origin:0 0;">EKK 4G2.5</div><div class="t" style="left:257px;top:181.11px;font-size:11.8px;letter-spacing:0px;color:#000;font-weight:400;font-family:'Liberation Sans',sans-serif;transform:scaleX(0.85);transform-origin:0 0;">PE</div><div class="t" style="left:884px;top:181.11px;font-size:11.8px;letter-spacing:0px;color:#000;font-weight:400;font-family:'Liberation Sans',sans-serif;transform:scaleX(0.85);transform-origin:0 0;">WK003</div><div class="t" style="left:17.8px;top:197.11px;font-size:11.8px;letter-spacing:0px;color:#000;font-weight:400;font-family:'Liberation Sans',sans-serif;transform:scaleX(0.85);transform-origin:0 0;">EKK 4G2.5</div><div class="t" style="left:104px;top:197.11px;font-size:11.8px;letter-spacing:0px;color:#000;font-weight:400;font-family:'Liberation Sans',sans-serif;transform:scaleX(0.85);transform-origin:0 0;">=A1-W103</div><div class="t" style="left:257px;top:197.11px;font-size:11.8px;letter-spacing:0px;color:#000;font-weight:400;font-family:'Liberation Sans',sans-serif;transform:scaleX(0.85);transform-origin:0 0;">L1</div><div class="t" style="left:304px;top:197.11px;font-size:11.8px;letter-spacing:0px;color:#000;font-weight:400;font-family:'Liberation Sans',sans-serif;transform:scaleX(0.85);transform-origin:0 0;">=A1+D3-X3</div><div class="t" style="left:449px;top:197.11px;font-size:11.8px;letter-spacing:0px;color:#000;font-weight:400;font-family:'Liberation Sans',sans-serif;transform:scaleX(0.85);transform-origin:0 0;">3U</div><div class="t" style="left:518px;top:197.11px;font-size:11.8px;letter-spacing:0px;color:#000;font-weight:400;font-family:'Liberation Sans',sans-serif;transform:scaleX(0.85);transform-origin:0 0;">=A1+E3-Q1</div><div class="t" style="left:663px;top:197.11px;font-size:11.8px;letter-spacing:0px;color:#000;font-weight:400;font-family:'Liberation Sans',sans-serif;transform:scaleX(0.85);transform-origin:0 0;">1</div><div class="t" style="left:710px;top:197.11px;font-size:11.8px;letter-spacing:0px;color:#000;font-weight:400;font-family:'Liberation Sans',sans-serif;transform:scaleX(0.85);transform-origin:0 0;">&amp;EFS/1.5E</div><div class="t" style="left:884px;top:197.11px;font-size:11.8px;letter-spacing:0px;color:#000;font-weight:400;font-family:'Liberation Sans',sans-serif;transform:scaleX(0.85);transform-origin:0 0;">WK003</div><div class="t" style="left:17.8px;top:213.11px;font-size:11.8px;letter-spacing:0px;color:#000;font-weight:400;font-family:'Liberation Sans',sans-serif;transform:scaleX(0.85);transform-origin:0 0;">EKK 4G2.5</div><div class="t" style="left:257px;top:213.11px;font-size:11.8px;letter-spacing:0px;color:#000;font-weight:400;font-family:'Liberation Sans',sans-serif;transform:scaleX(0.85);transform-origin:0 0;">L2</div><div class="t" style="left:304px;top:213.11px;font-size:11.8px;letter-spacing:0px;color:#000;font-weight:400;font-family:'Liberation Sans',sans-serif;transform:scaleX(0.85);transform-origin:0 0;">=A1+D3-X3</div><div class="t" style="left:449px;top:213.11px;font-size:11.8px;letter-spacing:0px;color:#000;font-weight:400;font-family:'Liberation Sans',sans-serif;transform:scaleX(0.85);transform-origin:0 0;">3V</div><div class="t" style="left:518px;top:213.11px;font-size:11.8px;letter-spacing:0px;color:#000;font-weight:400;font-family:'Liberation Sans',sans-serif;transform:scaleX(0.85);transform-origin:0 0;">=A1+E3-Q1</div><div class="t" style="left:663px;top:213.11px;font-size:11.8px;letter-spacing:0px;color:#000;font-weight:400;font-family:'Liberation Sans',sans-serif;transform:scaleX(0.85);transform-origin:0 0;">3</div><div class="t" style="left:710px;top:213.11px;font-size:11.8px;letter-spacing:0px;color:#000;font-weight:400;font-family:'Liberation Sans',sans-serif;transform:scaleX(0.85);transform-origin:0 0;">&amp;EFS/1.5E</div><div class="t" style="left:884px;top:213.11px;font-size:11.8px;letter-spacing:0px;color:#000;font-weight:400;font-family:'Liberation Sans',sans-serif;transform:scaleX(0.85);transform-origin:0 0;">WK003</div><div class="t" style="left:17.8px;top:229.11px;font-size:11.8px;letter-spacing:0px;color:#000;font-weight:400;font-family:'Liberation Sans',sans-serif;transform:scaleX(0.85);transform-origin:0 0;">EKK 4G2.5</div><div class="t" style="left:257px;top:229.11px;font-size:11.8px;letter-spacing:0px;color:#000;font-weight:400;font-family:'Liberation Sans',sans-serif;transform:scaleX(0.85);transform-origin:0 0;">L3</div><div class="t" style="left:304px;top:229.11px;font-size:11.8px;letter-spacing:0px;color:#000;font-weight:400;font-family:'Liberation Sans',sans-serif;transform:scaleX(0.85);transform-origin:0 0;">=A1+D3-X3</div><div class="t" style="left:449px;top:229.11px;font-size:11.8px;letter-spacing:0px;color:#000;font-weight:400;font-family:'Liberation Sans',sans-serif;transform:scaleX(0.85);transform-origin:0 0;">3W</div><div class="t" style="left:518px;top:229.11px;font-size:11.8px;letter-spacing:0px;color:#000;font-weight:400;font-family:'Liberation Sans',sans-serif;transform:scaleX(0.85);transform-origin:0 0;">=A1+E3-Q1</div><div class="t" style="left:663px;top:229.11px;font-size:11.8px;letter-spacing:0px;color:#000;font-weight:400;font-family:'Liberation Sans',sans-serif;transform:scaleX(0.85);transform-origin:0 0;">5</div><div class="t" style="left:710px;top:229.11px;font-size:11.8px;letter-spacing:0px;color:#000;font-weight:400;font-family:'Liberation Sans',sans-serif;transform:scaleX(0.85);transform-origin:0 0;">&amp;EFS/1.5E</div><div class="t" style="left:884px;top:229.11px;font-size:11.8px;letter-spacing:0px;color:#000;font-weight:400;font-family:'Liberation Sans',sans-serif;transform:scaleX(0.85);transform-origin:0 0;">WK003</div><div class="t" style="left:17.8px;top:245.11px;font-size:11.8px;letter-spacing:0px;color:#000;font-weight:400;font-family:'Liberation Sans',sans-serif;transform:scaleX(0.85);transform-origin:0 0;">EKK 4G2.5</div><div class="t" style="left:257px;top:245.11px;font-size:11.8px;letter-spacing:0px;color:#000;font-weight:400;font-family:'Liberation Sans',sans-serif;transform:scaleX(0.85);transform-origin:0 0;">PE</div><div class="t" style="left:884px;top:245.11px;font-size:11.8px;letter-spacing:0px;color:#000;font-weight:400;font-family:'Liberation Sans',sans-serif;transform:scaleX(0.85);transform-origin:0 0;">WK003</div><div class="t" style="left:17.8px;top:261.11px;font-size:11.8px;letter-spacing:0px;color:#000;font-weight:400;font-family:'Liberation Sans',sans-serif;transform:scaleX(0.85);transform-origin:0 0;">EKK 2X1.5</div><div class="t" style="left:104px;top:261.11px;font-size:11.8px;letter-spacing:0px;color:#000;font-weight:400;font-family:'Liberation Sans',sans-serif;transform:scaleX(0.85);transform-origin:0 0;">=A1-W105</div><div class="t" style="left:257px;top:261.11px;font-size:11.8px;letter-spacing:0px;color:#000;font-weight:400;font-family:'Liberation Sans',sans-serif;transform:scaleX(0.85);transform-origin:0 0;">1</div><div class="t" style="left:304px;top:261.11px;font-size:11.8px;letter-spacing:0px;color:#000;font-weight:400;font-family:'Liberation Sans',sans-serif;transform:scaleX(0.85);transform-origin:0 0;">=A1+D3-X1</div><div class="t" style="left:449px;top:261.11px;font-size:11.8px;letter-spacing:0px;color:#000;font-weight:400;font-family:'Liberation Sans',sans-serif;transform:scaleX(0.85);transform-origin:0 0;">100</div><div class="t" style="left:518px;top:261.11px;font-size:11.8px;letter-spacing:0px;color:#000;font-weight:400;font-family:'Liberation Sans',sans-serif;transform:scaleX(0.85);transform-origin:0 0;">=A1+E1-X1</div><div class="t" style="left:663px;top:261.11px;font-size:11.8px;letter-spacing:0px;color:#000;font-weight:400;font-family:'Liberation Sans',sans-serif;transform:scaleX(0.85);transform-origin:0 0;">1</div><div class="t" style="left:710px;top:261.11px;font-size:11.8px;letter-spacing:0px;color:#000;font-weight:400;font-family:'Liberation Sans',sans-serif;transform:scaleX(0.85);transform-origin:0 0;">&amp;EFS/2.3B</div><div class="t" style="left:884px;top:261.11px;font-size:11.8px;letter-spacing:0px;color:#000;font-weight:400;font-family:'Liberation Sans',sans-serif;transform:scaleX(0.85);transform-origin:0 0;">WK002</div><div class="t" style="left:17.8px;top:277.11px;font-size:11.8px;letter-spacing:0px;color:#000;font-weight:400;font-family:'Liberation Sans',sans-serif;transform:scaleX(0.85);transform-origin:0 0;">EKK 2X1.5</div><div class="t" style="left:257px;top:277.11px;font-size:11.8px;letter-spacing:0px;color:#000;font-weight:400;font-family:'Liberation Sans',sans-serif;transform:scaleX(0.85);transform-origin:0 0;">2</div><div class="t" style="left:304px;top:277.11px;font-size:11.8px;letter-spacing:0px;color:#000;font-weight:400;font-family:'Liberation Sans',sans-serif;transform:scaleX(0.85);transform-origin:0 0;">=A1+D3-X1</div><div class="t" style="left:449px;top:277.11px;font-size:11.8px;letter-spacing:0px;color:#000;font-weight:400;font-family:'Liberation Sans',sans-serif;transform:scaleX(0.85);transform-origin:0 0;">106</div><div class="t" style="left:518px;top:277.11px;font-size:11.8px;letter-spacing:0px;color:#000;font-weight:400;font-family:'Liberation Sans',sans-serif;transform:scaleX(0.85);transform-origin:0 0;">=A1+E1-X1</div><div class="t" style="left:663px;top:277.11px;font-size:11.8px;letter-spacing:0px;color:#000;font-weight:400;font-family:'Liberation Sans',sans-serif;transform:scaleX(0.85);transform-origin:0 0;">2</div><div class="t" style="left:710px;top:277.11px;font-size:11.8px;letter-spacing:0px;color:#000;font-weight:400;font-family:'Liberation Sans',sans-serif;transform:scaleX(0.85);transform-origin:0 0;">&amp;EFS/2.5B</div><div class="t" style="left:884px;top:277.11px;font-size:11.8px;letter-spacing:0px;color:#000;font-weight:400;font-family:'Liberation Sans',sans-serif;transform:scaleX(0.85);transform-origin:0 0;">WK002</div><div class="t" style="left:17.8px;top:293.11px;font-size:11.8px;letter-spacing:0px;color:#000;font-weight:400;font-family:'Liberation Sans',sans-serif;transform:scaleX(0.85);transform-origin:0 0;">EKK 2X1.5</div><div class="t" style="left:104px;top:293.11px;font-size:11.8px;letter-spacing:0px;color:#000;font-weight:400;font-family:'Liberation Sans',sans-serif;transform:scaleX(0.85);transform-origin:0 0;">=A1-W106</div><div class="t" style="left:257px;top:293.11px;font-size:11.8px;letter-spacing:0px;color:#000;font-weight:400;font-family:'Liberation Sans',sans-serif;transform:scaleX(0.85);transform-origin:0 0;">1</div><div class="t" style="left:304px;top:293.11px;font-size:11.8px;letter-spacing:0px;color:#000;font-weight:400;font-family:'Liberation Sans',sans-serif;transform:scaleX(0.85);transform-origin:0 0;">=A1+D3-X1</div><div class="t" style="left:449px;top:293.11px;font-size:11.8px;letter-spacing:0px;color:#000;font-weight:400;font-family:'Liberation Sans',sans-serif;transform:scaleX(0.85);transform-origin:0 0;">101</div><div class="t" style="left:518px;top:293.11px;font-size:11.8px;letter-spacing:0px;color:#000;font-weight:400;font-family:'Liberation Sans',sans-serif;transform:scaleX(0.85);transform-origin:0 0;">=A1+E3-X1</div><div class="t" style="left:663px;top:293.11px;font-size:11.8px;letter-spacing:0px;color:#000;font-weight:400;font-family:'Liberation Sans',sans-serif;transform:scaleX(0.85);transform-origin:0 0;">1</div><div class="t" style="left:710px;top:293.11px;font-size:11.8px;letter-spacing:0px;color:#000;font-weight:400;font-family:'Liberation Sans',sans-serif;transform:scaleX(0.85);transform-origin:0 0;">&amp;EFS/2.3C</div><div class="t" style="left:884px;top:293.11px;font-size:11.8px;letter-spacing:0px;color:#000;font-weight:400;font-family:'Liberation Sans',sans-serif;transform:scaleX(0.85);transform-origin:0 0;">WK002</div><svg style="left:0;top:0" width="995" height="300"><rect x="7.5" y="5" width="2" height="12" fill="#1ee6f5"/><rect x="9.5" y="6" width="1" height="11" fill="#101818"/><rect x="5" y="9" width="10" height="2" fill="#1ee6f5"/><rect x="5" y="11" width="10" height="0.8" fill="#183030"/><rect x="7.5" y="17" width="2" height="16" fill="#1ee6f5"/><rect x="9.5" y="18" width="1" height="15" fill="#101818"/><rect x="5" y="25" width="10" height="2" fill="#1ee6f5"/><rect x="5" y="27" width="10" height="0.8" fill="#183030"/><rect x="7.5" y="33" width="2" height="16" fill="#1ee6f5"/><rect x="9.5" y="34" width="1" height="15" fill="#101818"/><rect x="5" y="41" width="10" height="2" fill="#1ee6f5"/><rect x="5" y="43" width="10" height="0.8" fill="#183030"/><rect x="7.5" y="49" width="2" height="13" fill="#1ee6f5"/><rect x="9.5" y="50" width="1" height="13.5" fill="#101818"/><rect x="5" y="57" width="10" height="2" fill="#1ee6f5"/><rect x="5" y="59" width="10" height="0.8" fill="#183030"/><rect x="7.5" y="69" width="2" height="12" fill="#1ee6f5"/><rect x="9.5" y="70" width="1" height="11" fill="#101818"/><rect x="5" y="73" width="10" height="2" fill="#1ee6f5"/><rect x="5" y="75" width="10" height="0.8" fill="#183030"/><rect x="7.5" y="81" width="2" height="16" fill="#1ee6f5"/><rect x="9.5" y="82" width="1" height="15" fill="#101818"/><rect x="5" y="89" width="10" height="2" fill="#1ee6f5"/><rect x="5" y="91" width="10" height="0.8" fill="#183030"/><rect x="7.5" y="97" width="2" height="13" fill="#1ee6f5"/><rect x="9.5" y="98" width="1" height="13.5" fill="#101818"/><rect x="5" y="105" width="10" height="2" fill="#1ee6f5"/><rect x="5" y="107" width="10" height="0.8" fill="#183030"/><rect x="8.2" y="114" width="3" height="13" fill="#e01818"/><rect x="4.699999999999999" y="120.5" width="10.4" height="2.6" fill="#e01818"/><rect x="10" y="114" width="1.2" height="13" fill="#8a0a0a"/><rect x="4.699999999999999" y="122.60000000000002" width="10.4" height="0.9" fill="#8a0a0a"/><rect x="7.5" y="133" width="2" height="12" fill="#1ee6f5"/><rect x="9.5" y="134" width="1" height="11" fill="#101818"/><rect x="5" y="137" width="10" height="2" fill="#1ee6f5"/><rect x="5" y="139" width="10" height="0.8" fill="#183030"/><rect x="7.5" y="145" width="2" height="16" fill="#1ee6f5"/><rect x="9.5" y="146" width="1" height="15" fill="#101818"/><rect x="5" y="153" width="10" height="2" fill="#1ee6f5"/><rect x="5" y="155" width="10" height="0.8" fill="#183030"/><rect x="7.5" y="161" width="2" height="13" fill="#1ee6f5"/><rect x="9.5" y="162" width="1" height="13.5" fill="#101818"/><rect x="5" y="169" width="10" height="2" fill="#1ee6f5"/><rect x="5" y="171" width="10" height="0.8" fill="#183030"/><rect x="8.2" y="178" width="3" height="13" fill="#e01818"/><rect x="4.699999999999999" y="184.5" width="10.4" height="2.6" fill="#e01818"/><rect x="10" y="178" width="1.2" height="13" fill="#8a0a0a"/><rect x="4.699999999999999" y="186.60000000000002" width="10.4" height="0.9" fill="#8a0a0a"/><rect x="7.5" y="197" width="2" height="12" fill="#1ee6f5"/><rect x="9.5" y="198" width="1" height="11" fill="#101818"/><rect x="5" y="201" width="10" height="2" fill="#1ee6f5"/><rect x="5" y="203" width="10" height="0.8" fill="#183030"/><rect x="7.5" y="209" width="2" height="16" fill="#1ee6f5"/><rect x="9.5" y="210" width="1" height="15" fill="#101818"/><rect x="5" y="217" width="10" height="2" fill="#1ee6f5"/><rect x="5" y="219" width="10" height="0.8" fill="#183030"/><rect x="7.5" y="225" width="2" height="13" fill="#1ee6f5"/><rect x="9.5" y="226" width="1" height="13.5" fill="#101818"/><rect x="5" y="233" width="10" height="2" fill="#1ee6f5"/><rect x="5" y="235" width="10" height="0.8" fill="#183030"/><rect x="8.2" y="242" width="3" height="13" fill="#e01818"/><rect x="4.699999999999999" y="248.5" width="10.4" height="2.6" fill="#e01818"/><rect x="10" y="242" width="1.2" height="13" fill="#8a0a0a"/><rect x="4.699999999999999" y="250.60000000000002" width="10.4" height="0.9" fill="#8a0a0a"/><rect x="7.5" y="261" width="2" height="12" fill="#1ee6f5"/><rect x="9.5" y="262" width="1" height="11" fill="#101818"/><rect x="5" y="265" width="10" height="2" fill="#1ee6f5"/><rect x="5" y="267" width="10" height="0.8" fill="#183030"/><rect x="7.5" y="273" width="2" height="13" fill="#1ee6f5"/><rect x="9.5" y="274" width="1" height="13.5" fill="#101818"/><rect x="5" y="281" width="10" height="2" fill="#1ee6f5"/><rect x="5" y="283" width="10" height="0.8" fill="#183030"/><rect x="7.5" y="293" width="2" height="12" fill="#1ee6f5"/><rect x="9.5" y="294" width="1" height="11" fill="#101818"/><rect x="5" y="297" width="10" height="2" fill="#1ee6f5"/><rect x="5" y="299" width="10" height="0.8" fill="#183030"/></svg></div><div class="r" style="left:1002px;top:141px;width:17px;height:314px;background:#f0f0f0;"></div><div class="r" style="left:1003px;top:157.5px;width:13px;height:167px;background:#cdcdcd;"></div><div class="r" style="left:7px;top:455px;width:995px;height:15px;background:#f0f0f0;"></div><div class="r" style="left:23px;top:455px;width:899px;height:13px;background:#cdcdcd;"></div><div class="r" style="left:1002px;top:455px;width:17px;height:15px;background:#f0f0f0;"></div><svg style="left:0;top:0" width="1024" height="688"><path d="M1005.5 152.5L1009.5 148.5L1013.5 152.5" stroke="#606060" stroke-width="1.6" fill="none"/><path d="M1005.5 443.5L1009.5 447.5L1013.5 443.5" stroke="#606060" stroke-width="1.6" fill="none"/><path d="M16.5 457.5L12.5 461.5L16.5 465.5" stroke="#606060" stroke-width="1.6" fill="none"/><path d="M992 457.5L996 461.5L992 465.5" stroke="#606060" stroke-width="1.6" fill="none"/></svg><div class="r" style="left:0px;top:474px;width:1024px;height:1px;background:#a0a0a0;"></div><div class="r" style="left:16.5px;top:495.5px;width:113.0px;height:23.0px;background:#f0f0f0;border-top:1px solid #fff;border-left:1px solid #fff;border-right:1px solid #696969;border-bottom:1px solid #696969;box-shadow:inset -1px -1px 0 #a0a0a0;"></div><div class="t" style="left:21.8px;top:501.11px;font-size:11.8px;letter-spacing:0px;color:#a0a0a0;font-weight:400;font-family:'Liberation Sans',sans-serif;transform:scaleX(0.85);transform-origin:0 0;">Starta Dynamic OnLine</div><div class="r" style="left:16.5px;top:525.5px;width:113.0px;height:23.0px;background:#f0f0f0;border-top:1px solid #fff;border-left:1px solid #fff;border-right:1px solid #696969;border-bottom:1px solid #696969;box-shadow:inset -1px -1px 0 #a0a0a0;"></div><div class="t" style="left:31px;top:531.81px;font-size:11.8px;letter-spacing:0px;color:#000;font-weight:400;font-family:'Liberation Sans',sans-serif;transform:scaleX(0.85);transform-origin:0 0;">Återgå till AutoCAD</div><div class="t" style="left:16.6px;top:563.59px;font-size:11px;letter-spacing:0.28px;color:#000;font-weight:700;font-family:'Liberation Sans',sans-serif;-webkit-text-stroke:0.2px #000;">PDS.Server.7.00</div><div class="r" style="left:155px;top:485px;width:164px;height:106px;border:1px solid #c2c2c2;box-shadow:inset 1px 1px 0 #fbfbfb, 1px 1px 0 #fbfbfb;"></div><div class="r" style="left:160.7px;top:479px;width:30px;height:10px;background:#f0f0f0;"></div><div class="t" style="left:162.7px;top:480.89px;font-size:11px;letter-spacing:-0.25px;color:#000;font-weight:700;font-family:'Liberation Sans',sans-serif;-webkit-text-stroke:0.25px #000;">Filter</div><div class="r" style="left:320.5px;top:485px;width:244.5px;height:106px;border:1px solid #c2c2c2;box-shadow:inset 1px 1px 0 #fbfbfb, 1px 1px 0 #fbfbfb;"></div><div class="r" style="left:325.7px;top:479px;width:76px;height:10px;background:#f0f0f0;"></div><div class="t" style="left:327.7px;top:480.89px;font-size:11px;letter-spacing:-0.25px;color:#000;font-weight:700;font-family:'Liberation Sans',sans-serif;-webkit-text-stroke:0.25px #000;">Förbindningar</div><div class="r" style="left:567px;top:485px;width:168px;height:106px;border:1px solid #c2c2c2;box-shadow:inset 1px 1px 0 #fbfbfb, 1px 1px 0 #fbfbfb;"></div><div class="r" style="left:573.5px;top:479px;width:56px;height:10px;background:#f0f0f0;"></div><div class="t" style="left:575.5px;top:480.89px;font-size:11px;letter-spacing:-0.25px;color:#000;font-weight:700;font-family:'Liberation Sans',sans-serif;-webkit-text-stroke:0.25px #000;">Plinttabell</div><div class="r" style="left:736.5px;top:485px;width:150.5px;height:106px;border:1px solid #c2c2c2;box-shadow:inset 1px 1px 0 #fbfbfb, 1px 1px 0 #fbfbfb;"></div><div class="r" style="left:742.2px;top:479px;width:39px;height:10px;background:#f0f0f0;"></div><div class="t" style="left:744.2px;top:480.89px;font-size:11px;letter-spacing:-0.25px;color:#000;font-weight:700;font-family:'Liberation Sans',sans-serif;-webkit-text-stroke:0.25px #000;">Layout</div><div class="t" style="left:179.6px;top:496.61px;font-size:11.8px;letter-spacing:0px;color:#000;font-weight:400;font-family:'Liberation Sans',sans-serif;transform:scaleX(0.84);transform-origin:0 0;">Filtrera på anläggning.</div><div class="t" style="left:179.6px;top:511.61px;font-size:11.8px;letter-spacing:0px;color:#000;font-weight:400;font-family:'Liberation Sans',sans-serif;transform:scaleX(0.84);transform-origin:0 0;">Filtrera på placering.</div><div class="t" style="left:179.6px;top:526.61px;font-size:11.8px;letter-spacing:0px;color:#000;font-weight:400;font-family:'Liberation Sans',sans-serif;transform:scaleX(0.84);transform-origin:0 0;">Valfritt (postbeteckning)</div><div class="t" style="left:179.6px;top:541.61px;font-size:11.8px;letter-spacing:0px;color:#000;font-weight:400;font-family:'Liberation Sans',sans-serif;transform:scaleX(0.84);transform-origin:0 0;">Inget filter.</div><div class="r" style="left:328px;top:496.7px;width:11px;height:11px;background:#fff;border-top:1px solid #909090;border-left:1px solid #909090;box-shadow:inset 1px 1px 0 #dcdcdc;"></div><div class="t" style="left:344.7px;top:496.81px;font-size:11.8px;letter-spacing:0px;color:#000;font-weight:400;font-family:'Liberation Sans',sans-serif;transform:scaleX(0.84);transform-origin:0 0;">Nollnumrera vid inläsning av förbindningsdata.</div><div class="r" style="left:328px;top:511.70000000000005px;width:11px;height:11px;background:#fff;border-top:1px solid #909090;border-left:1px solid #909090;box-shadow:inset 1px 1px 0 #dcdcdc;"></div><div class="t" style="left:344.7px;top:511.81px;font-size:11.8px;letter-spacing:0px;color:#000;font-weight:400;font-family:'Liberation Sans',sans-serif;transform:scaleX(0.84);transform-origin:0 0;">Ignorera plintnummerkontroll</div><div class="r" style="left:328px;top:526.7px;width:11px;height:11px;background:#fff;border-top:1px solid #909090;border-left:1px solid #909090;box-shadow:inset 1px 1px 0 #dcdcdc;"></div><div class="t" style="left:344.7px;top:526.81px;font-size:11.8px;letter-spacing:0px;color:#000;font-weight:400;font-family:'Liberation Sans',sans-serif;transform:scaleX(0.84);transform-origin:0 0;">Skriv över existerande nollnummer</div><div class="r" style="left:575px;top:495.1px;width:11px;height:11px;background:#fff;border-top:1px solid #909090;border-left:1px solid #909090;box-shadow:inset 1px 1px 0 #dcdcdc;"></div><div class="t" style="left:592.4px;top:495.21px;font-size:11.8px;letter-spacing:0px;color:#000;font-weight:400;font-family:'Liberation Sans',sans-serif;transform:scaleX(0.84);transform-origin:0 0;">Hämta alltid förbindningstabell</div><div class="r" style="left:575px;top:510.4px;width:11px;height:11px;background:#fff;border-top:1px solid #909090;border-left:1px solid #909090;box-shadow:inset 1px 1px 0 #dcdcdc;"></div><div class="t" style="left:592.4px;top:510.51px;font-size:11.8px;letter-spacing:0px;color:#000;font-weight:400;font-family:'Liberation Sans',sans-serif;transform:scaleX(0.84);transform-origin:0 0;">Visa uttag</div><div class="r" style="left:575px;top:525.7px;width:11px;height:11px;background:#fff;border-top:1px solid #909090;border-left:1px solid #909090;box-shadow:inset 1px 1px 0 #dcdcdc;"></div><div class="t" style="left:592.4px;top:525.81px;font-size:11.8px;letter-spacing:0px;color:#000;font-weight:400;font-family:'Liberation Sans',sans-serif;transform:scaleX(0.84);transform-origin:0 0;">Fyll ut obyglade nivåer</div><div class="r" style="left:575px;top:541.0px;width:11px;height:11px;background:#fff;border-top:1px solid #909090;border-left:1px solid #909090;box-shadow:inset 1px 1px 0 #dcdcdc;"></div><div class="t" style="left:592.4px;top:541.11px;font-size:11.8px;letter-spacing:0px;color:#000;font-weight:400;font-family:'Liberation Sans',sans-serif;transform:scaleX(0.84);transform-origin:0 0;">Filtrera bort byglade ansl.</div><div class="r" style="left:575px;top:556.3000000000001px;width:11px;height:11px;background:#fff;border-top:1px solid #909090;border-left:1px solid #909090;box-shadow:inset 1px 1px 0 #dcdcdc;"></div><div class="t" style="left:592.4px;top:556.41px;font-size:11.8px;letter-spacing:0px;color:#000;font-weight:400;font-family:'Liberation Sans',sans-serif;transform:scaleX(0.84);transform-origin:0 0;">Visa korta byglingar (länkar)</div><div class="r" style="left:744.5px;top:496.8px;width:11px;height:11px;background:#fff;border-top:1px solid #909090;border-left:1px solid #909090;box-shadow:inset 1px 1px 0 #dcdcdc;"></div><div class="t" style="left:760.9px;top:496.91px;font-size:11.8px;letter-spacing:0px;color:#000;font-weight:400;font-family:'Liberation Sans',sans-serif;transform:scaleX(0.84);transform-origin:0 0;">Ta hänsyn till anläggning</div><div class="r" style="left:744.5px;top:512.0px;width:11px;height:11px;background:#fff;border-top:1px solid #909090;border-left:1px solid #909090;box-shadow:inset 1px 1px 0 #dcdcdc;"></div><div class="t" style="left:760.9px;top:512.11px;font-size:11.8px;letter-spacing:0px;color:#000;font-weight:400;font-family:'Liberation Sans',sans-serif;transform:scaleX(0.84);transform-origin:0 0;">Extrahera endast symboler</div><div class="t" style="left:760.9px;top:526.61px;font-size:11.8px;letter-spacing:0px;color:#000;font-weight:400;font-family:'Liberation Sans',sans-serif;transform:scaleX(0.84);transform-origin:0 0;">utan layoutsymbol.</div><div class="r" style="left:744.5px;top:542.0px;width:11px;height:11px;background:#fff;border-top:1px solid #909090;border-left:1px solid #909090;box-shadow:inset 1px 1px 0 #dcdcdc;"></div><div class="t" style="left:760.9px;top:542.11px;font-size:11.8px;letter-spacing:0px;color:#000;font-weight:400;font-family:'Liberation Sans',sans-serif;transform:scaleX(0.84);transform-origin:0 0;">Uppdatera bara markerade</div><div class="t" style="left:760.9px;top:556.61px;font-size:11.8px;letter-spacing:0px;color:#000;font-weight:400;font-family:'Liberation Sans',sans-serif;transform:scaleX(0.84);transform-origin:0 0;">symboler/grupper.</div><svg style="left:0;top:0" width="1024" height="688"><circle cx="168.3" cy="501.8" r="5.2" fill="#fff"/><path d="M164.6 505.5A5.2 5.2 0 0 1 172 498.1" stroke="#8a8a8a" stroke-width="1.2" fill="none"/><circle cx="168.3" cy="516.8" r="5.2" fill="#fff"/><path d="M164.6 520.5A5.2 5.2 0 0 1 172 513.0999999999999" stroke="#8a8a8a" stroke-width="1.2" fill="none"/><circle cx="168.3" cy="531.8" r="5.2" fill="#fff"/><path d="M164.6 535.5A5.2 5.2 0 0 1 172 528.0999999999999" stroke="#8a8a8a" stroke-width="1.2" fill="none"/><circle cx="168.3" cy="546.8" r="5.2" fill="#fff"/><path d="M164.6 550.5A5.2 5.2 0 0 1 172 543.0999999999999" stroke="#8a8a8a" stroke-width="1.2" fill="none"/><circle cx="168.3" cy="546.8" r="2" fill="#111"/><path d="M577.5 546.0L579.5 549.0L583.5 543.5" stroke="#111" stroke-width="1.7" fill="none"/><path d="M747.0 517.0L749.0 520.0L753.0 514.5" stroke="#111" stroke-width="1.7" fill="none"/></svg><div class="r" style="left:162.5px;top:570.5px;width:112px;height:18.5px;background:#fff;border-top:1px solid #a0a0a0;border-left:1px solid #a0a0a0;box-shadow:inset 1px 1px 0 #696969;"></div><div class="r" style="left:283.5px;top:570.5px;width:29.5px;height:19.5px;background:#f0f0f0;border-top:1px solid #fff;border-left:1px solid #fff;border-right:1px solid #696969;border-bottom:1px solid #696969;box-shadow:inset -1px -1px 0 #a0a0a0;"></div><div class="t" style="left:294px;top:574.31px;font-size:11.8px;letter-spacing:0px;color:#000;font-weight:400;font-family:'Liberation Sans',sans-serif;transform:scaleX(0.85);transform-origin:0 0;">...</div><div class="r" style="left:323.5px;top:565px;width:76.5px;height:24px;background:#f0f0f0;border-top:1px solid #fff;border-left:1px solid #fff;border-right:1px solid #696969;border-bottom:1px solid #696969;box-shadow:inset -1px -1px 0 #a0a0a0;"></div><div class="t" style="left:334px;top:571.81px;font-size:11.8px;letter-spacing:0px;color:#a0a0a0;font-weight:400;font-family:'Liberation Sans',sans-serif;transform:scaleX(0.85);transform-origin:0 0;">Nollnumrera</div><div class="r" style="left:488.5px;top:565px;width:75.5px;height:24px;background:#f0f0f0;border-top:1px solid #fff;border-left:1px solid #fff;border-right:1px solid #696969;border-bottom:1px solid #696969;box-shadow:inset -1px -1px 0 #a0a0a0;"></div><div class="t" style="left:515.5px;top:571.81px;font-size:11.8px;letter-spacing:0px;color:#a0a0a0;font-weight:400;font-family:'Liberation Sans',sans-serif;transform:scaleX(0.85);transform-origin:0 0;">För in</div><div class="r" style="left:4.9px;top:624px;width:89.8px;height:18px;background:#f6f6f6;"></div><div class="t" style="left:4.9px;width:90px;text-align:center;top:629.09px;font-size:11px;color:#a3a3a3;">Hjälp</div><div class="r" style="left:98.56px;top:624px;width:89.8px;height:18px;background:#f6f6f6;"></div><div class="t" style="left:98.56px;width:90px;text-align:center;top:629.09px;font-size:11px;color:#a3a3a3;">Ny</div><div class="r" style="left:192.22px;top:624px;width:89.8px;height:18px;background:#f6f6f6;"></div><div class="t" style="left:192.22px;width:90px;text-align:center;top:629.09px;font-size:11px;color:#a3a3a3;">Radera</div><div class="t" style="left:285.88px;width:90px;text-align:center;top:629.09px;font-size:11px;font-weight:700;color:#222;letter-spacing:-0.1px;">Kopiera</div><div class="r" style="left:379.54px;top:624px;width:89.8px;height:18px;background:#f6f6f6;"></div><div class="t" style="left:379.54px;width:90px;text-align:center;top:629.09px;font-size:11px;color:#a3a3a3;">Klistra in</div><div class="r" style="left:473.2px;top:624px;width:89.8px;height:18px;background:#f6f6f6;"></div><div class="t" style="left:473.2px;width:90px;text-align:center;top:629.09px;font-size:11px;color:#a3a3a3;">Sök</div><div class="r" style="left:566.86px;top:624px;width:89.8px;height:18px;background:#f6f6f6;"></div><div class="t" style="left:566.86px;width:90px;text-align:center;top:629.09px;font-size:11px;color:#a3a3a3;">Editera</div><div class="r" style="left:660.52px;top:624px;width:89.8px;height:18px;background:#f6f6f6;"></div><div class="t" style="left:660.52px;width:90px;text-align:center;top:629.09px;font-size:11px;color:#a3a3a3;">Reorganisera</div><div class="r" style="left:754.18px;top:624px;width:89.8px;height:18px;background:#f6f6f6;"></div><div class="t" style="left:754.18px;width:90px;text-align:center;top:629.09px;font-size:11px;color:#a3a3a3;">Öppna</div><div class="r" style="left:98.56px;top:647px;width:89.8px;height:17px;background:#f6f6f6;"></div><div class="t" style="left:98.56px;width:90px;text-align:center;top:650.19px;font-size:11px;color:#a3a3a3;">Ny mellan</div><div class="r" style="left:379.54px;top:647px;width:89.8px;height:17px;background:#f6f6f6;"></div><div class="t" style="left:379.54px;width:90px;text-align:center;top:650.19px;font-size:11px;color:#a3a3a3;">Klistra in mellan</div><div class="r" style="left:473.2px;top:647px;width:89.8px;height:17px;background:#f6f6f6;"></div><div class="t" style="left:473.2px;width:90px;text-align:center;top:650.19px;font-size:11px;color:#a3a3a3;">Filter</div><div class="r" style="left:566.86px;top:647px;width:89.8px;height:17px;background:#f6f6f6;"></div><div class="t" style="left:566.86px;width:90px;text-align:center;top:650.19px;font-size:11px;color:#a3a3a3;">Global editering</div><div class="t" style="left:660.52px;width:90px;text-align:center;top:650.19px;font-size:11px;font-weight:700;color:#222;letter-spacing:-0.1px;">Samla upp</div><div class="r" style="left:754.18px;top:647px;width:89.8px;height:17px;background:#f6f6f6;"></div><div class="t" style="left:754.18px;width:90px;text-align:center;top:650.19px;font-size:11px;color:#a3a3a3;">Avbryt</div><div class="r" style="left:850px;top:620px;width:172px;height:47px;background:#fff;border-left:1px solid #b4b4b4;"></div><div class="r" style="left:0px;top:667px;width:1024px;height:1px;background:#a0a0a0;"></div><div class="r" style="left:0px;top:668px;width:1024px;height:19px;background:#f0f0f0;"></div><div class="r" style="left:711px;top:671px;width:239px;height:15px;background:#808080;"></div><div class="t" style="left:711px;width:239px;text-align:center;top:673.5px;font-size:11px;font-weight:700;color:#111;">0%</div><div class="r" style="left:953px;top:671px;width:52px;height:15px;border-top:1px solid #a0a0a0;border-left:1px solid #a0a0a0;border-right:1px solid #fff;border-bottom:1px solid #fff;"></div><svg style="left:0;top:0" width="1024" height="688"><path d="M1012 686L1022 676M1016 686L1022 680M1020 686L1022 684" stroke="#a0a0a0" stroke-width="1"/></svg><div class="r" style="left:0px;top:0px;width:1024px;height:688px;border:1px solid #3a3a3a;border-left-color:#6a6a6a;"></div></body></html>
